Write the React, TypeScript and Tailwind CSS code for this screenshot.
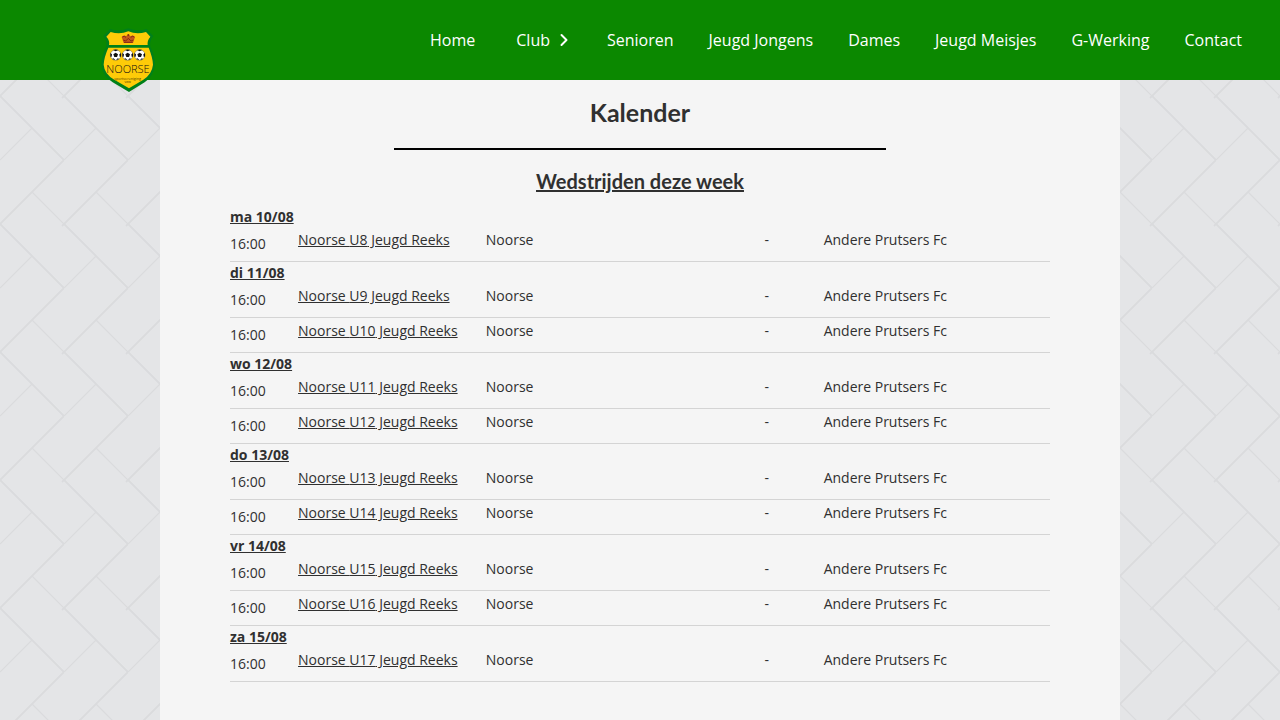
import { ChevronRight } from "lucide-react";

type Day = { label: string; teams: string[] };

const days: Day[] = [
  { label: "ma 10/08", teams: ["U8"] },
  { label: "di 11/08", teams: ["U9", "U10"] },
  { label: "wo 12/08", teams: ["U11", "U12"] },
  { label: "do 13/08", teams: ["U13", "U14"] },
  { label: "vr 14/08", teams: ["U15", "U16"] },
  { label: "za 15/08", teams: ["U17"] },
];

const linksAfterClub = ["Senioren", "Jeugd Jongens", "Dames", "Jeugd Meisjes", "G-Werking", "Contact"];

function Ball({ x }: { x: number }) {
  return (
    <g transform={`translate(${x} 105)`}>
      <circle r="16" fill="#fff" stroke="#333" strokeWidth="1" />
      <path d="M0 -7 L7 -2 L4 6 L-4 6 L-7 -2 Z" fill="#111" />
      <path d="M-8 -15 Q0 -18 8 -15 L0 -11 Z M-16 -6 L-11 -2 L-12 5 L-16 5 Z M16 -6 L11 -2 L12 5 L16 5 Z M-11 12 L-6 10 L-1 16 Z M11 12 L6 10 L1 16 Z" fill="#111" />
    </g>
  );
}

function Logo() {
  return (
    <svg viewBox="33 24 162 192" className="h-16 w-[54px]" role="img" aria-label="Noorse">
      <path d="M60 27 Q88 36 115 25 Q142 36 170 27 L190 48 Q178 62 181 80 Q194 104 195 134 Q192 166 164 187 L117 216 L68 187 Q37 166 34 134 Q35 104 49 80 Q52 62 40 48 Z" fill="#00801a" />
      <path d="M62 36 Q90 44 115 34 Q140 44 168 36 L181 50 Q171 62 173 75 H57 Q60 62 49 50 Z" fill="#fecb08" />
      <path d="M55 83 H176 Q188 112 189 134 Q186 162 160 179 L117 205 L73 179 Q43 162 41 134 Q42 112 55 83 Z" fill="#fecb08" />
      <path d="M101 69 L95 51 Q101 43 108 49 Q115 40 122 49 Q129 43 135 51 L129 69 Z" fill="#c4581c" />
      <path d="M102 67 H128 M100 60 L107 63 L115 55 L123 63 L130 60 M97 51 Q103 46 108 52 M122 52 Q128 46 133 51" fill="none" stroke="#842a16" strokeWidth="3" />
      <circle cx="115" cy="45" r="3" fill="#842a16" />
      <Ball x={77} />
      <Ball x={113} />
      <Ball x={149} />
      <text x="114" y="159" textAnchor="middle" fill="#111" className="font-['Open_Sans'] text-[33px] font-light">NOORSE</text>
      <text x="113" y="179" textAnchor="middle" fill="#4d4100" className="font-['Open_Sans'] text-[11px]">sportvereniging</text>
      <text x="113" y="189" textAnchor="middle" fill="#4d4100" className="font-['Open_Sans'] text-[11px]">vzw</text>
    </svg>
  );
}

function PavingBackground() {
  return (
    <svg className="absolute inset-0 -z-10 h-full w-full" aria-hidden="true">
      <defs>
        <pattern id="paving" width="64" height="128" patternUnits="userSpaceOnUse">
          <g fill="none" stroke="#dadbdd">
            <path d="M-2 94 L0 96 L32 128 L34 130 M30 -2 L64 32 L66 34 M-2 30 L0 32 M66 30 L64 32 L0 96 L-2 98 M62 98 L66 94" strokeWidth="1.8" />
            <path d="M32 0 L0 32 M32 64 L64 96" strokeWidth="1.2" />
          </g>
        </pattern>
      </defs>
      <rect width="100%" height="100%" fill="#e4e5e7" />
      <rect width="100%" height="100%" fill="url(#paving)" />
    </svg>
  );
}

export default function App() {
  return (
    <div className="relative isolate min-h-screen font-['Open_Sans',sans-serif] text-[#303030]">
      <PavingBackground />
      <header className="relative z-10 flex h-20 items-start justify-between bg-[#0b8800] pr-[38px] pl-[101px] text-white">
        <a href="#" className="mt-7 shrink-0">
          <Logo />
        </a>
        <nav className="flex h-20 items-center gap-[35px] text-base">
          <a href="#">Home</a>
          <a href="#" className="-mr-0.5 flex items-center gap-1 pl-1.5">
            Club
            <ChevronRight className="size-5" strokeWidth={2.4} />
          </a>
          {linksAfterClub.map((label) => (
            <a key={label} href="#" className="whitespace-nowrap">
              {label}
            </a>
          ))}
        </nav>
      </header>
      <main className="mx-auto min-h-[calc(100vh-80px)] max-w-[960px] bg-[#f5f5f5] px-[70px] pt-4 pb-9">
        <h1 className="text-center font-['Lato',sans-serif] text-[25px] leading-8 font-bold">Kalender</h1>
        <hr className="mx-auto mt-5 w-3/5 border-t-2 border-black" />
        <h2 className="mt-[18px] mb-3 text-center font-['Lato',sans-serif] text-xl leading-[26px] font-bold underline">
          Wedstrijden deze week
        </h2>
        <table className="w-full table-fixed border-separate border-spacing-0 text-left text-sm leading-5">
          <colgroup>
            <col className="w-[8.3%]" />
            <col className="w-[22.9%]" />
            <col className="w-[34%]" />
            <col className="w-[7.2%]" />
            <col />
          </colgroup>
          {days.map((day) => (
            <tbody key={day.label}>
              <tr className="h-[21px]">
                <th colSpan={5} scope="rowgroup" className="p-0 font-bold underline">
                  {day.label}
                </th>
              </tr>
              {day.teams.map((team) => (
                <tr key={team} className="h-[35px] align-top *:border-b *:border-[#d4d4d4]">
                  <td className="pt-[7px]">16:00</td>
                  <td className="pt-[3px]">
                    <a href="#" className="whitespace-nowrap underline">
                      Noorse {team} Jeugd Reeks
                    </a>
                  </td>
                  <td className="pt-[3px]">Noorse</td>
                  <td className="pt-[3px]">-</td>
                  <td className="pt-[3px]">Andere Prutsers Fc</td>
                </tr>
              ))}
            </tbody>
          ))}
        </table>
      </main>
    </div>
  );
}
